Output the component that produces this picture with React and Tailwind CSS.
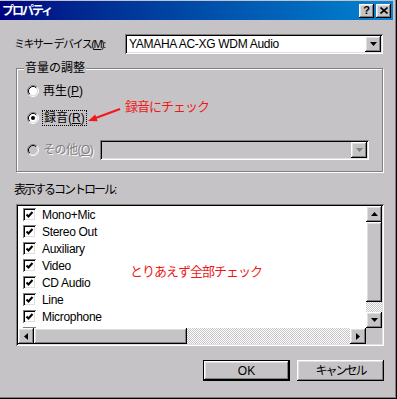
import React from "react";

const sunken =
  "shadow-[inset_1px_1px_0_#808080,inset_-1px_-1px_0_#ffffff,inset_2px_2px_0_#000000,inset_-2px_-2px_0_#dfdfdf]";
const raised =
  "shadow-[inset_-1px_-1px_0_#000000,inset_1px_1px_0_#ffffff,inset_-2px_-2px_0_#808080,inset_2px_2px_0_#dfdfdf]";
const hatch =
  "bg-[image:repeating-conic-gradient(#c6c3c6_0_25%,#ffffff_0_50%)] bg-size-[2px_2px]";

function Arrow({ dir = "down", color = "#000000" }) {
  const pts = {
    down: "0,0 7,0 3.5,4",
    up: "3.5,0 7,4 0,4",
    left: "4,0 4,7 0,3.5",
    right: "0,0 4,3.5 0,7",
  }[dir];
  const vertical = dir === "down" || dir === "up";
  return (
    <svg
      width={vertical ? 7 : 4}
      height={vertical ? 4 : 7}
      viewBox={vertical ? "0 0 7 4" : "0 0 4 7"}
    >
      <polygon points={pts} fill={color} />
    </svg>
  );
}

function ScrollButton({ dir, className = "" }) {
  return (
    <div
      className={`w-4 h-4 shrink-0 flex items-center justify-center bg-[#c6c3c6] ${raised} ${className}`}
    >
      <Arrow dir={dir} />
    </div>
  );
}

function Radio({ checked, disabled }) {
  return (
    <svg width="12" height="12" viewBox="0 0 12 12" className="shrink-0">
      <circle cx="6" cy="6" r="4.5" fill={disabled ? "#c6c3c6" : "#ffffff"} />
      <path d="M9.89 2.11 A5.5 5.5 0 0 0 2.11 9.89" fill="none" stroke="#808080" />
      <path d="M2.11 9.89 A5.5 5.5 0 0 0 9.89 2.11" fill="none" stroke="#ffffff" />
      <path d="M9.18 2.82 A4.5 4.5 0 0 0 2.82 9.18" fill="none" stroke="#000000" />
      <path d="M2.82 9.18 A4.5 4.5 0 0 0 9.18 2.82" fill="none" stroke="#dfdfdf" />
      {checked && <circle cx="6" cy="6" r="2" fill="#000000" />}
    </svg>
  );
}

function CheckBox() {
  return (
    <div className={`w-[13px] h-[13px] shrink-0 bg-white ${sunken} flex items-center justify-center`}>
      <svg width="9" height="9" viewBox="0 0 9 9">
        <path d="M1.5 4.5 L3.5 6.5 L7.5 2" fill="none" stroke="#000000" strokeWidth="2" />
      </svg>
    </div>
  );
}

const controls = [
  "Mono+Mic",
  "Stereo Out",
  "Auxiliary",
  "Video",
  "CD Audio",
  "Line",
  "Microphone",
  "Telephone",
];

export default function App() {
  return (
    <div className="relative w-[397px] h-[399px] overflow-hidden bg-[#c6c3c6] pt-px pr-[4px] shadow-[inset_-1px_-1px_0_#000000,inset_-2px_-2px_0_#808080] font-['Liberation_Sans','Noto_Sans_CJK_JP',sans-serif] text-[12px] text-black">
      {/* Title bar */}
      <div className="h-[19px] flex items-center justify-between pl-[2px] pr-[2px] bg-gradient-to-r from-[#000080] to-[#1084d0]">
        <span className="text-white font-bold text-[12px] tracking-[-2px] leading-none">
          プロパティ
        </span>
        <div className="flex items-center gap-[2px]">
          <div className={`w-[15px] h-[14px] bg-[#c6c3c6] ${raised} flex items-center justify-center`}>
            <span className="font-bold text-[11px] leading-none">?</span>
          </div>
          <div className={`w-[15px] h-[14px] bg-[#c6c3c6] ${raised} flex items-center justify-center`}>
            <svg width="8" height="7" viewBox="0 0 8 7">
              <path d="M0.5 0.5 L7.5 6.5 M7.5 0.5 L0.5 6.5" stroke="#000000" strokeWidth="1.6" />
            </svg>
          </div>
        </div>
      </div>

      {/* Mixer device */}
      <div className="mt-[14px] h-[20px] flex items-center pl-[14px] pr-[10px]">
        <span className="whitespace-pre text-[11px] tracking-[-1.5px]">
          ミキサー デバイス(<span className="underline">M</span>):
        </span>
        <div className="flex-1" />
        <div className={`w-[258px] shrink-0 h-[20px] bg-white ${sunken} flex items-center pl-[4px] pr-[2px]`}>
          <span className="flex-1 tracking-[-0.3px]">YAMAHA AC-XG WDM Audio</span>
          <ScrollButton dir="down" />
        </div>
      </div>

      {/* Volume group */}
      <div className="relative mt-[14px] ml-[16px] w-[367px] h-[104px] border border-[#808080] shadow-[inset_1px_1px_0_#ffffff,1px_1px_0_#ffffff] pl-[10px] pt-[14px]">
        <div className="absolute -top-[8px] left-[7px] px-[1px] bg-[#c6c3c6] leading-[14px]">
          音量の調整
        </div>
        <div className="h-[16px] flex items-center gap-[4px]">
          <Radio />
          <span>
            再生(<span className="underline">P</span>)
          </span>
        </div>
        <div className="mt-[11px] h-[16px] flex items-center gap-[3px]">
          <Radio checked />
          <span className="border border-dotted border-black px-px leading-[14px]">
            録音(<span className="underline">R</span>)
          </span>
        </div>
        <div className="mt-[14px] h-[20px] flex items-center">
          <Radio disabled />
          <span className="ml-[4px] w-[57px] shrink-0 text-[#808080] [text-shadow:1px_1px_0_#ffffff] whitespace-nowrap tracking-[-0.5px]">
            その他(<span className="underline">O</span>)
          </span>
          <div className={`w-[269px] h-[20px] bg-[#c6c3c6] ${sunken} flex items-center justify-end pr-[2px]`}>
            <div className={`w-4 h-4 flex items-center justify-center bg-[#c6c3c6] ${raised}`}>
              <Arrow dir="down" color="#808080" />
            </div>
          </div>
        </div>
      </div>

      {/* Controls list */}
      <div className="mt-[10px] pl-[14px] h-[16px] leading-[16px] tracking-[-2px]">
        表示するコントロール:
      </div>
      <div className={`mt-[6px] ml-[16px] w-[368px] h-[142px] bg-white ${sunken} p-[2px] flex flex-col`}>
        <div className="flex flex-1 min-h-0">
          <div className="flex-1 overflow-hidden pl-[5px]">
            {controls.map((c) => (
              <div key={c} className="h-[17px] flex items-center gap-[6px]">
                <CheckBox />
                <span className="tracking-[-0.3px]">{c}</span>
              </div>
            ))}
          </div>
          <div className="w-4 flex flex-col">
            <ScrollButton dir="up" />
            <div className={`h-[80px] bg-[#c6c3c6] ${raised}`} />
            <div className={`flex-1 ${hatch}`} />
            <ScrollButton dir="down" />
          </div>
        </div>
        <div className="h-[16px] flex">
          <ScrollButton dir="left" />
          <div className={`w-[153px] bg-[#c6c3c6] ${raised}`} />
          <div className={`flex-1 ${hatch}`} />
          <ScrollButton dir="right" />
          <div className="w-4 bg-[#c6c3c6]" />
        </div>
      </div>

      {/* Buttons */}
      <div className="mt-[14px] flex justify-end gap-[7px] pr-[9px]">
        <div className="w-[87px] h-[21px] border border-black">
          <div className={`w-full h-full flex items-center justify-center ${raised}`}>OK</div>
        </div>
        <div className={`w-[87px] h-[21px] flex items-center justify-center ${raised} tracking-[-2px]`}>
          キャンセル
        </div>
      </div>

      {/* Annotations */}
      <div className="absolute left-[125px] top-[100px] text-[13px] tracking-[-1px] leading-none text-[#f01818] whitespace-nowrap">
        録音にチェック
      </div>
      <svg className="absolute left-[80px] top-[100px]" width="50" height="30" viewBox="0 0 50 30">
        <line x1="40" y1="9" x2="15" y2="18.2" stroke="#f01818" strokeWidth="2" />
        <polygon points="8,21 17.65,21.19 15.25,14.61" fill="#f01818" />
      </svg>
      <div className="absolute left-[130px] top-[265px] text-[13px] tracking-[-1px] leading-none text-[#f01818] whitespace-nowrap">
        とりあえず全部チェック
      </div>
    </div>
  );
}
